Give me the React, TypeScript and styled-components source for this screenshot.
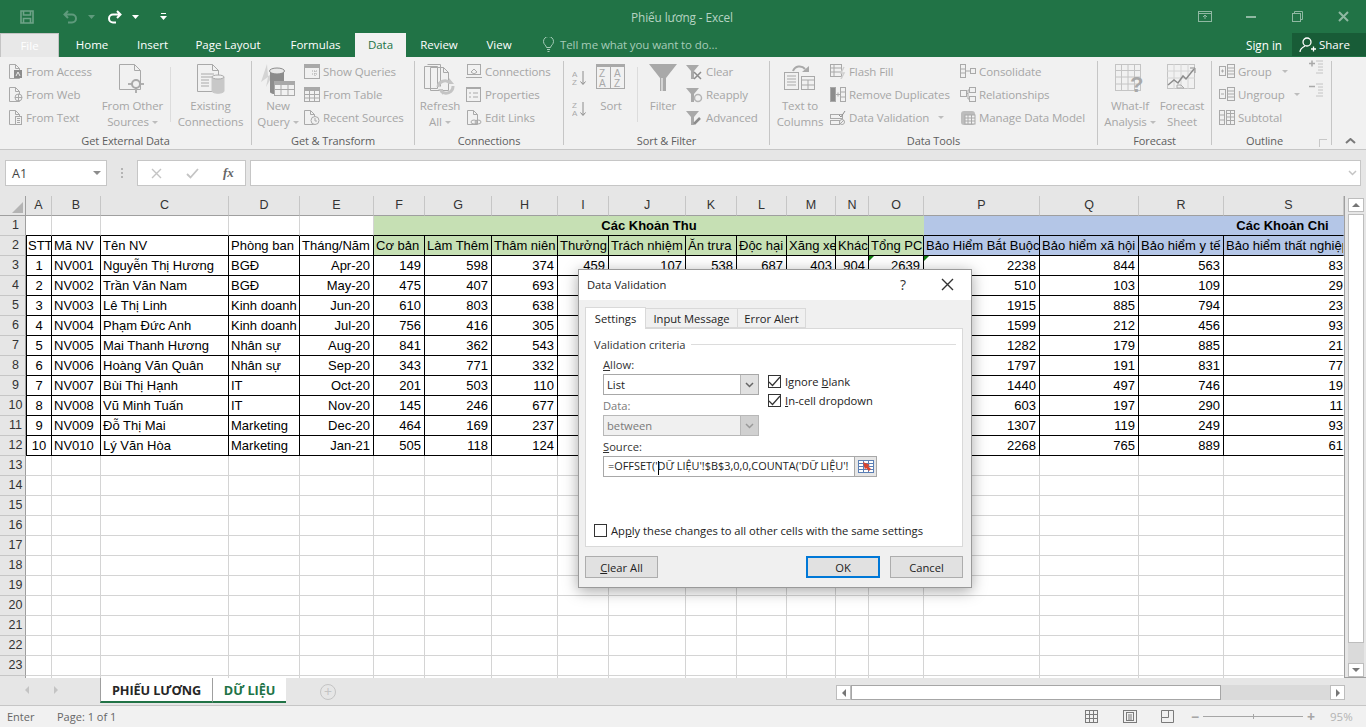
import React from "react";
import styled, { createGlobalStyle } from "styled-components";

const Global = createGlobalStyle`
  html, body { margin: 0; padding: 0; background: #e6e6e6; overflow: hidden; }
  * { box-sizing: border-box; }
`;
const UI = `"Open Sans", "Noto Sans", sans-serif`;
const Page = styled.div`
  width: 1366px; height: 727px; position: relative; overflow: hidden;
  display: flex; flex-direction: column; font-family: ${UI}; font-size: 11.5px; background: #e6e6e6;
`;

/* ---------- title bar ---------- */
const TitleBar = styled.div`
  height: 33px; flex: none; background: #217346; display: grid; grid-template-columns: 1fr auto 1fr; align-items: center;
`;
const Quick = styled.div`display: flex; align-items: center; padding-left: 20px;`;
const QuickSlot = styled.div<{ $w: number }>`width: ${p => p.$w}px; display: flex; align-items: center;`;
const Title = styled.div`color: #b6d3c3; font-size: 11.8px; letter-spacing: -0.1px; padding-right: 2px;`;
const WinButtons = styled.div`display: flex; justify-content: flex-end; align-items: center;`;
const WinSlot = styled.div<{ $w: number }>`width: ${p => p.$w}px; display: flex; justify-content: center;`;

const TabRow = styled.div`height: 24px; flex: none; background: #217346; display: flex; align-items: stretch; line-height: 22px;`;
const FileTab = styled.div`
  width: 59px; background: #e8e8e8; border: 1px solid #c4c4c4; border-bottom: none; color: #fff;
  display: flex; align-items: center; justify-content: center; font-size: 11.5px;
`;
const RibbonTab = styled.div<{ $w: number; $on?: boolean }>`
  width: ${p => p.$w}px; display: flex; align-items: center; justify-content: center; font-size: 11.5px; padding-bottom: 1px;
  background: ${p => (p.$on ? "#f1f1f1" : "transparent")}; color: ${p => (p.$on ? "#217346" : "#fff")};
`;
const TellMe = styled.div`margin-left: 17px; display: flex; align-items: center; gap: 6px; color: #a6ccb8; font-size: 11.5px; letter-spacing: -0.1px; padding-bottom: 1px;`;
const Spacer = styled.div`flex: 1;`;
const SignIn = styled.div`color: #fff; display: flex; align-items: center; padding-right: 10px; font-size: 11.7px; padding-bottom: 1px;`;
const Share = styled.div`
  width: 74px; height: 23px; background: #185c37; color: #fff; display: flex; align-items: center; gap: 3px; padding-left: 7px; font-size: 11.5px;
`;

/* ---------- ribbon ---------- */
const Ribbon = styled.div`
  height: 93px; flex: none; background: #f1f1f1; border-bottom: 1px solid #c6c6c6; padding-top: 4px; display: flex; position: relative;
`;
const Group = styled.div<{ $w: number }>`
  width: ${p => p.$w}px; height: 84px; flex: none; border-right: 1px solid #c6c6c6; position: relative;
`;
const GroupBody = styled.div<{ $pl: number }>`height: 72px; display: flex; padding-left: ${p => p.$pl}px;`;
const GroupLabel = styled.div<{ $pr?: number }>`
  height: 16px; line-height: 16px; text-align: center; color: #5e5e5e; font-size: 11px; letter-spacing: -0.1px; padding-right: ${p => p.$pr ?? 0}px; white-space: nowrap;
`;
const SmallCol = styled.div<{ $w?: number; $ml?: number }>`
  ${p => (p.$w ? `width: ${p.$w}px;` : "")} margin-left: ${p => p.$ml ?? 0}px; margin-top: -1px; display: flex; flex-direction: column; flex: none;
`;
const SmallItem = styled.div`
  height: 23px; display: flex; align-items: center; gap: 3px; color: #a6a6a6; font-size: 11.5px; white-space: nowrap; letter-spacing: -0.1px;
`;
const Large = styled.div<{ $w: number; $ml?: number }>`
  width: ${p => p.$w}px; margin-left: ${p => p.$ml ?? 0}px; flex: none; display: flex; flex-direction: column; align-items: center;
  color: #a6a6a6; font-size: 11.5px; letter-spacing: -0.1px;
`;
const LargeIcon = styled.div`height: 37px; display: flex; align-items: flex-start; padding-top: 3px;`;
const LargeLine = styled.div`height: 16px; line-height: 16px; white-space: nowrap; display: flex; align-items: center;`;
const Caret = styled.span<{ $ml?: number }>`
  display: inline-block; width: 0; height: 0; margin-left: ${p => p.$ml ?? 3}px;
  border-left: 3px solid transparent; border-right: 3px solid transparent; border-top: 3px solid #bdbdbd;
`;
const ThinSep = styled.div<{ $ml: number }>`width: 1px; height: 55px; margin: 6px 0 0 ${p => p.$ml}px; background: #dcdcdc; flex: none;`;
const SortCol = styled.div`width: 16px; flex: none; display: flex; flex-direction: column; gap: 15px; padding-top: 9px;`;
const Launcher = styled.div`position: absolute; right: 4px; bottom: -2px; width: 8px; height: 8px; border: 1px solid #c8c8c8; border-width: 1px 0 0 1px;`;
const Collapse = styled.div`position: absolute; left: 1345px; top: 81px;`;

const Svg = styled.svg`flex: none; display: block; fill: none; stroke: #a9a9a9; stroke-width: 1;`;

/* ---------- formula bar ---------- */
const FormulaRow = styled.div`height: 46px; flex: none; background: #e6e6e6; display: flex; padding: 10px 5px 0; align-items: flex-start;`;
const NameBox = styled.div`
  width: 102px; height: 26px; background: #fff; border: 1px solid #c6c6c6; display: flex; align-items: center; justify-content: space-between;
  padding: 0 5px 0 6px; color: #444; font-size: 12.5px;
`;
const Grip = styled.div`width: 30px; display: flex; flex-direction: column; align-items: center; gap: 2px; justify-content: center; height: 26px;`;
const GripDot = styled.div`width: 2px; height: 2px; background: #b4b4b4;`;
const FxBox = styled.div`
  width: 109px; height: 26px; background: #fff; border: 1px solid #c6c6c6; display: flex; align-items: center; padding-left: 13px; gap: 24px;
`;
const FxText = styled.span`font-family: "Liberation Serif", serif; font-style: italic; font-weight: 700; color: #666; font-size: 13px;`;
const FormulaInput = styled.div`
  flex: 1; margin-left: 4px; height: 26px; background: #fff; border: 1px solid #c6c6c6; display: flex; align-items: center; justify-content: flex-end; padding-right: 3px;
`;

/* ---------- sheet ---------- */
const Workspace = styled.div`height: 482px; flex: none; display: flex; background: #e6e6e6; border-bottom: 1px solid #9f9f9f;`;
const cols = [26, 26, 49, 128, 71, 74, 51, 67, 66, 51, 77, 51, 50, 49, 33, 55, 116, 99, 85, 120];
const Sheet = styled.div`
  width: 1345px; height: 482px; overflow: hidden; display: grid; flex: none; background: #fff; border-right: 1px solid #9f9f9f;
  grid-template-columns: ${cols.map(c => c + "px").join(" ")}; grid-auto-rows: 20px;
  font-family: "Liberation Sans", Arial, sans-serif; font-size: 13px; color: #000;
`;
const Corner = styled.div`
  background: #e6e6e6; border-right: 1px solid #9f9f9f; border-bottom: 1px solid #9f9f9f; position: relative;
  &::after { content: ""; position: absolute; right: 2px; bottom: 2px; border-style: solid; border-width: 0 0 11px 11px; border-color: transparent transparent #b4b4b4 transparent; }
`;
const ColHead = styled.div<{ $shift?: number }>`
  background: #e6e6e6; border-right: 1px solid #c6c6c6; border-bottom: 1px solid #9f9f9f; text-align: center; line-height: 19px;
  font-family: "Liberation Sans", Arial, sans-serif; font-size: 12.5px; color: #333; padding-left: ${p => p.$shift ?? 0}px;
`;
const RowHead = styled.div`
  background: #e6e6e6; border-right: 1px solid #9f9f9f; border-bottom: 1px solid #c6c6c6; text-align: center; line-height: 19px;
  font-size: 12.5px; color: #333; font-family: "Liberation Sans", Arial, sans-serif; padding-left: 6px;
`;
const Cell = styled.div<{ $a?: string; $fill?: string; $line?: boolean; $first?: boolean; $bold?: boolean; $span?: number; $pl?: number; $mark?: boolean; $last?: boolean }>`
  position: relative; overflow: hidden; white-space: nowrap; line-height: 19px; padding: 0 ${p => (p.$last ? 0 : 1)}px 0 ${p => p.$pl ?? 2}px;
  ${p => (p.$span ? `grid-column: span ${p.$span};` : "")}
  text-align: ${p => p.$a ?? "left"};
  font-weight: ${p => (p.$bold ? 700 : 400)};
  background: ${p => p.$fill ?? "#fff"};
  border-right: 1px solid ${p => (p.$last ? "transparent" : p.$line ? "#000" : "#d4d4d4")};
  border-bottom: 1px solid ${p => (p.$line ? "#000" : "#d4d4d4")};
  ${p => (p.$first ? "box-shadow: inset 1px 0 0 #000;" : "")}
  ${p => p.$mark ? `&::before { content: ""; position: absolute; left: 0; top: 0; border-style: solid; border-width: 5px 5px 0 0; border-color: #107c10 transparent transparent transparent; }` : ""}
`;
const CellPad = styled.span<{ $none?: boolean }>`padding-right: ${p => (p.$none ? 0 : 2)}px;`;

const VScroll = styled.div`width: 21px; flex: none; padding: 2px 2px 0 3px; display: flex; flex-direction: column;`;
const ScrollBtn = styled.div`
  width: 16px; height: 14px; flex: none; background: #fff; border: 1px solid #bdbdbd; display: flex; align-items: center; justify-content: center;
`;
const VThumb = styled.div`height: 429px; flex: none; margin-top: 2px; background: #fff; border: 1px solid #bdbdbd; width: 16px;`;
const VTrack = styled.div`flex: 1; background: #dadada;`;
const Tri = styled.span<{ $d: "up" | "down" | "left" | "right"; $c?: string }>`
  width: 0; height: 0; display: inline-block; border: 4px solid transparent;
  ${p => p.$d === "up" ? `border-top: 0; border-bottom-color: ${p.$c ?? "#767676"};` : ""}
  ${p => p.$d === "down" ? `border-bottom: 0; border-top-color: ${p.$c ?? "#767676"};` : ""}
  ${p => p.$d === "left" ? `border-left: 0; border-right-color: ${p.$c ?? "#767676"};` : ""}
  ${p => p.$d === "right" ? `border-right: 0; border-left-color: ${p.$c ?? "#767676"};` : ""}
`;

/* ---------- sheet tabs ---------- */
const SheetBar = styled.div`height: 28px; flex: none; background: #e6e6e6; display: flex; align-items: flex-start; border-bottom: 1px solid #c6c6c6;`;
const NavArrows = styled.div`width: 100px; height: 24px; display: flex; align-items: center; gap: 25px; padding-left: 25px;`;
const SheetTab = styled.div<{ $w: number; $green?: boolean }>`
  width: ${p => p.$w}px; height: 25px; background: #fff; border-left: 1px solid #9f9f9f; border-bottom: 2px solid #217346;
  display: flex; align-items: center; justify-content: center; font-weight: 700; font-size: 12.7px; letter-spacing: -0.1px;
  color: ${p => (p.$green ? "#217346" : "#262626")}; padding-top: 1px;
  &:last-of-type { border-right: 1px solid #9f9f9f; }
`;
const AddSheet = styled.div`
  width: 16px; height: 16px; margin: 6px 0 0 34px; border: 1px solid #c4c4c4; border-radius: 50%; display: flex; align-items: center; justify-content: center; color: #c4c4c4; font-size: 14px; line-height: 1;
`;
const HScroll = styled.div`margin: 7px 21px 0 auto; width: 509px; height: 15px; display: flex;`;
const HBtn = styled.div`width: 15px; height: 15px; flex: none; background: #fff; border: 1px solid #bdbdbd; display: flex; align-items: center; justify-content: center;`;
const HThumb = styled.div`width: 370px; flex: none; background: #fff; border: 1px solid #a6a6a6;`;
const HTrack = styled.div`flex: 1; background: #dadada;`;

/* ---------- status bar ---------- */
const StatusBar = styled.div`flex: 1; background: #f1f1f1; display: flex; align-items: center; color: #666; font-size: 11px; padding-left: 7px;`;
const StatusText = styled.div<{ $w: number }>`width: ${p => p.$w}px;`;
const StatusRight = styled.div`margin-left: auto; display: flex; align-items: center;`;
const ViewBtn = styled.div`width: 38px; display: flex; justify-content: center;`;
const ZoomLine = styled.div`width: 100px; height: 1px; background: #a6a6a6; margin: 0 4px; position: relative;
  &::after { content: ""; position: absolute; left: 50%; top: -2px; width: 1px; height: 5px; background: #a6a6a6; }`;
const ZoomSign = styled.div<{ $ml?: number }>`color: #a6a6a6; font-weight: 700; font-size: 14px; width: 8px; text-align: center; line-height: 1; margin-left: ${p => p.$ml ?? 0}px;`;
const ZoomPct = styled.div`color: #b4b4b4; width: 51px; padding-left: 15px; font-size: 11.5px;`;

/* ---------- dialog ---------- */
const Dialog = styled.div`
  position: absolute; left: 578px; top: 269px; width: 394px; height: 319px; background: #f0f0f0; border: 1px solid #9a9a9a;
  box-shadow: 0 3px 14px rgba(0,0,0,.35); color: #333; font-size: 11.2px; display: flex; flex-direction: column;
`;
const DlgTitle = styled.div`height: 30px; flex: none; background: #fff; display: flex; align-items: center; padding: 0 0 2px 8px; font-size: 11.2px; color: #222;`;
const DlgQ = styled.div`margin-left: auto; width: 56px; text-align: center; font-size: 14px; color: #333;`;
const DlgX = styled.div`width: 40px; display: flex; justify-content: center; padding-right: 8px;`;
const DlgTabs = styled.div`display: flex; padding: 7px 0 0 6px; height: 28px; flex: none; align-items: flex-end; position: relative; z-index: 1;`;
const DlgTab = styled.div<{ $w: number; $on?: boolean }>`
  width: ${p => p.$w}px; height: ${p => (p.$on ? 22 : 20)}px; margin-bottom: ${p => (p.$on ? -1 : 0)}px;
  background: ${p => (p.$on ? "#fff" : "#f0f0f0")}; border: 1px solid #d9d9d9; border-bottom: ${p => (p.$on ? "none" : "1px solid #d9d9d9")};
  ${p => (p.$on ? "" : "border-left: none;")}
  display: flex; align-items: center; justify-content: center; color: #222;
`;
const DlgPanel = styled.div`
  margin: 0 8px 0 6px; height: 219px; flex: none; background: #fff; border: 1px solid #d9d9d9; padding: 8px 6px 0 8px; display: flex; flex-direction: column;
`;
const Fieldset = styled.div`display: flex; align-items: center; gap: 5px; height: 15px; color: #333;`;
const FieldLine = styled.div`flex: 1; height: 1px; background: #dcdcdc;`;
const FormRow = styled.div`display: flex; padding-left: 9px; margin-top: 5px;`;
const FormCol = styled.div`width: 156px; flex: none;`;
const FieldLabel = styled.div<{ $off?: boolean }>`height: 16px; line-height: 16px; color: ${p => (p.$off ? "#7a7a7a" : "#333")};`;
const Select = styled.div<{ $off?: boolean }>`
  height: 21px; margin: 1px 0 3px; border: 1px solid ${p => (p.$off ? "#b8b8b8" : "#a8a8a8")}; display: flex; align-items: center; padding-left: 3px;
  background: ${p => (p.$off ? "#f0f0f0" : "#fff")}; color: ${p => (p.$off ? "#7a7a7a" : "#222")};
`;
const SelectBtn = styled.div<{ $off?: boolean }>`
  margin-left: auto; width: 18px; height: 19px; background: ${p => (p.$off ? "#d0d0d0" : "#e1e1e1")}; border-left: 1px solid #b8b8b8; display: flex; align-items: center; justify-content: center;
`;
const CheckCol = styled.div`margin-left: 9px; padding-top: 18px; display: flex; flex-direction: column; gap: 6px;`;
const CheckRow = styled.div`display: flex; align-items: center; gap: 4px; height: 13px; color: #222; white-space: nowrap;`;
const CheckLabel = styled.span``;
const Box = styled.div`width: 13px; height: 13px; flex: none; border: 1px solid #333; background: #fff; display: flex; align-items: center; justify-content: center;`;
const U = styled.span`text-decoration: underline;`;
const SourceBlock = styled.div`padding-left: 9px;`;
const SourceInput = styled.div`
  width: 274px; height: 21px; margin-top: 1px; border: 1px solid #a8a8a8; background: #fff; display: flex; align-items: center; padding-left: 4px; color: #222; white-space: nowrap; overflow: hidden; position: relative;
`;
const Caretline = styled.span`display: inline-block; width: 1px; height: 14px; background: #000; margin: 0 -1px 0 0; vertical-align: middle;`;
const SourceText = styled.div`flex: 1; overflow: hidden; font-size: 10.9px;`;
const RefBtn = styled.div`width: 22px; height: 19px; flex: none; background: #e6e6e6; border-left: 1px solid #a8a8a8; display: flex; align-items: center; justify-content: center;`;
const ApplyRow = styled.div`display: flex; align-items: center; gap: 4px; margin-top: auto; margin-bottom: 9px; height: 13px; color: #222;`;
const DlgFooter = styled.div`display: flex; padding: 9px 8px 0 6px; justify-content: flex-start;`;
const Btn = styled.div<{ $primary?: boolean; $ml?: number | string }>`
  width: ${p => (p.$primary ? 74 : 73)}px; height: 22px; margin-left: ${p => p.$ml ?? 0};
  background: #e1e1e1; border: ${p => (p.$primary ? "2px solid #0078d7" : "1px solid #adadad")};
  display: flex; align-items: center; justify-content: center; color: #222;
`;

/* ---------- icons ---------- */
const Doc = ({ x = 0.5, y = 0.5, w = 10, h = 14 }: { x?: number; y?: number; w?: number; h?: number }) => (
  <path d={`M${x} ${y}h${w - 4}l4 4v${h - 4}h-${w}z M${x + w - 4} ${y}v4h4`} />
);
const IAccess = () => <Svg width="14" height="15"><Doc /><rect x="5" y="6" width="8" height="8" fill="#8c8c8c" stroke="none" /><path d="M7 12l2-4 2 4" stroke="#eee" /></Svg>;
const IWeb = () => <Svg width="14" height="15"><Doc /><circle cx="9.5" cy="10.5" r="3.5" fill="#f1f1f1" /><path d="M6 10.5h7M9.5 7v7" /></Svg>;
const IText = () => <Svg width="14" height="15"><Doc /><rect x="6.5" y="6.5" width="6" height="8" fill="#f1f1f1" /><path d="M8 8.5h3M8 10.5h3M8 12.5h3" /></Svg>;
const IOther = () => <Svg width="28" height="30"><path d="M.5.5h15l6 6v19H.5z M15.5.5v6h6" /><rect x="8" y="15" width="16" height="2" fill="#b0b0b0" stroke="none" transform="translate(1 4)" /><rect x="16" y="15" width="2" height="14" fill="#b0b0b0" stroke="none" /><circle cx="17" cy="20" r="4" fill="#f1f1f1" strokeWidth="2" /></Svg>;
const IExisting = () => <Svg width="28" height="30"><path d="M.5.5h15l6 6v21H.5z M15.5.5v6h6" /><path d="M4 10h13M4 13h13M4 16h8M4 19h8M4 22h8" /><path d="M15 13v14c0 3 12 3 12 0V13" fill="#c8c8c8" stroke="#c8c8c8" /><ellipse cx="21" cy="13" rx="6" ry="2" fill="#f1f1f1" /></Svg>;
const INewQuery = () => <Svg width="34" height="33"><path d="M6 0L0 18l7-5-2 10 8-14-6 3z" fill="#d4d4d4" stroke="none" /><path d="M9 8v20c0 3 14 3 14 0V8" fill="#8c8c8c" stroke="none" /><ellipse cx="16" cy="7" rx="7.5" ry="3" fill="#e8e8e8" stroke="#8c8c8c" /><rect x="13.5" y="17.5" width="20" height="14" fill="#f1f1f1" /><rect x="13.5" y="17.5" width="20" height="3" fill="#a9a9a9" /><path d="M20 20v11M27 20v11M14 25.5h19" /></Svg>;
const IShowQ = () => <Svg width="16" height="15"><rect x=".5" y=".5" width="15" height="14" /><rect x=".5" y=".5" width="15" height="3" fill="#a9a9a9" /><path d="M8 7h5M8 10h5M11 7v5" strokeDasharray="1 1" /></Svg>;
const ITable = () => <Svg width="16" height="15"><rect x=".5" y=".5" width="15" height="14" /><rect x=".5" y=".5" width="15" height="3" fill="#a9a9a9" /><path d="M5.5 3v12M10.5 3v12M0 7.5h16M0 11h16" /></Svg>;
const IRecent = () => <Svg width="16" height="15"><Doc /><circle cx="11" cy="10.5" r="4" fill="#f1f1f1" /><path d="M11 8v3h2" /></Svg>;
const IRefresh = () => <Svg width="32" height="32"><path d="M.5 2.5h13v22H.5z M3.5.5h13v22M6.5 3.5h13l5 5v18h-18z" fill="#f1f1f1" /><path d="M19.5 3.5v5h5" /><path d="M14 23a7 7 0 0 1 12-4M29 22a7 7 0 0 1-12 5" stroke="#c4c4c4" strokeWidth="3" /><path d="M25 14v6h5zM19 31v-6h-5z" fill="#c4c4c4" stroke="none" /></Svg>;
const IConn = () => <Svg width="16" height="15"><rect x="1.5" y=".5" width="13" height="10" /><path d="M0 13.5h16M5 8l3-3 3 3-3 2z" /></Svg>;
const IProps = () => <Svg width="16" height="15"><rect x=".5" y=".5" width="14" height="14" /><path d="M0 .5h15" strokeWidth="3" /><path d="M3 6h2M3 10h2M7 6h5M7 10h5" /></Svg>;
const ILinks = () => <Svg width="16" height="15"><Doc x={1.5} /><ellipse cx="8" cy="12" rx="3" ry="2" fill="#f1f1f1" /><ellipse cx="12" cy="12" rx="3" ry="2" /></Svg>;
const ISortAZ = ({ flip }: { flip?: boolean }) => (
  <Svg width="15" height="16">
    <text x="0" y="7" fontSize="8" fontFamily="Liberation Sans" stroke="none" fill="#a9a9a9">{flip ? "Z" : "A"}</text>
    <text x="0" y="15" fontSize="8" fontFamily="Liberation Sans" stroke="none" fill="#a9a9a9">{flip ? "A" : "Z"}</text>
    <path d="M11 1v13M8.5 11.5l2.5 3 2.5-3" stroke="#8c8c8c" />
  </Svg>
);
const ISort = () => (
  <Svg width="30" height="26">
    <rect x=".5" y=".5" width="28" height="24" />
    <rect x="0" y="0" width="29" height="3" fill="#a9a9a9" stroke="none" />
    <path d="M14.5 3v22" />
    <text x="3" y="13" fontSize="10" fontFamily="Liberation Sans" stroke="none" fill="#a9a9a9">Z</text>
    <text x="3" y="23" fontSize="10" fontFamily="Liberation Sans" stroke="none" fill="#a9a9a9">A</text>
    <text x="18" y="13" fontSize="10" fontFamily="Liberation Sans" stroke="none" fill="#a9a9a9">A</text>
    <text x="18" y="23" fontSize="10" fontFamily="Liberation Sans" stroke="none" fill="#a9a9a9">Z</text>
  </Svg>
);
const IFilter = () => <Svg width="28" height="28"><path d="M0 0h28L17 14v13h-6V14z" fill="#a9a9a9" stroke="none" /><path d="M13 14v13" stroke="#d4d4d4" strokeWidth="2" /></Svg>;
const SmallFunnel = () => <path d="M0 1h13L8 7v8H5V7z" fill="#a9a9a9" stroke="none" />;
const IClear = () => <Svg width="17" height="16"><SmallFunnel /><path d="M8 8l7 7M15 8l-7 7" stroke="#8c8c8c" strokeWidth="1.5" /></Svg>;
const IReapply = () => <Svg width="17" height="16"><SmallFunnel /><circle cx="12" cy="11" r="3.5" fill="#f1f1f1" stroke="#b4b4b4" strokeWidth="1.5" /></Svg>;
const IAdv = () => <Svg width="17" height="16"><SmallFunnel /><path d="M8 14l6-6" stroke="#8c8c8c" strokeWidth="2.5" /></Svg>;
const ITextCols = () => (
  <Svg width="32" height="26">
    <rect x=".5" y="8.5" width="14" height="17" /><path d="M3 12h9M3 15h9M3 18h9M3 21h9" />
    <rect x="17.5" y="12.5" width="13" height="13" /><path d="M17 16h14M24 16v10M17 21h14" />
    <path d="M9 7a7 7 0 0 1 12-2" strokeWidth="2" /><path d="M18 8h7V2z" fill="#a9a9a9" stroke="none" />
  </Svg>
);
const IFlash = () => <Svg width="16" height="15"><rect x=".5" y=".5" width="11" height="12" /><path d="M0 4h12M0 8h12M4 0v12" /><path d="M14 3l-3 6h3l-3 6" stroke="#d0d0d0" strokeWidth="1.5" /></Svg>;
const IRemDup = () => <Svg width="16" height="15"><rect x=".5" y=".5" width="5" height="14" fill="#8c8c8c" /><rect x="10.5" y=".5" width="5" height="14" /><path d="M10 5h6M10 10h6M6 7.5h4M8 5.5v4" /></Svg>;
const IValid = () => <Svg width="16" height="15"><rect x=".5" y="4.5" width="12" height="4" /><rect x=".5" y="10.5" width="9" height="4" /><path d="M9 5l2 2 4-6" stroke="#8c8c8c" /><circle cx="12" cy="12" r="2.5" /><path d="M10 14l4-4" /></Svg>;
const IConsol = () => <Svg width="16" height="15"><rect x=".5" y=".5" width="5" height="13" /><path d="M0 5h6M0 9h6" /><rect x="10.5" y="4.5" width="5" height="5" /><path d="M6 7h4" /></Svg>;
const IRel = () => <Svg width="16" height="15"><rect x=".5" y="3.5" width="6" height="6" /><rect x="9.5" y=".5" width="6" height="5" /><rect x="9.5" y="9.5" width="6" height="5" /><path d="M6 6.5h2V3h2M8 6.5V12h2" /></Svg>;
const IModel = () => <Svg width="16" height="15"><rect x="1" y="1" width="14" height="14" rx="3" fill="#bdbdbd" stroke="none" /><rect x="5" y="5" width="10" height="9" fill="#f1f1f1" /><path d="M8 5v9M11.5 5v9M5 8h10M5 11h10" /></Svg>;
const IWhatIf = () => (
  <Svg width="30" height="34">
    <rect x=".5" y=".5" width="25" height="26" stroke="#c4c4c4" />
    <path d="M6.5 0v27M13 0v27M19.5 0v27M0 6.5h26M0 13h26M0 20h26" stroke="#c4c4c4" />
    <text x="15" y="28" fontSize="22" fontWeight="700" fontFamily="Liberation Sans" stroke="none" fill="#a9a9a9">?</text>
  </Svg>
);
const IForecast = () => (
  <Svg width="30" height="26">
    <rect x=".5" y=".5" width="27" height="24" stroke="#c4c4c4" />
    <path d="M7 0v25M14 0v25M21 0v25M0 7h28M0 14h28" stroke="#d4d4d4" />
    <path d="M1 21l6-5 4 3 5-7 3 3 8-10" stroke="#8c8c8c" strokeWidth="1.5" />
    <path d="M10 21h4l3 3h-7z" /><path d="M23 4h5v5" stroke="#8c8c8c" />
  </Svg>
);
const IGroup = ({ u }: { u?: boolean }) => <Svg width="16" height="15"><rect x=".5" y="2.5" width="6" height="9" /><path d={u ? "M2 7h3" : "M2 7h3M3.5 5.5v3"} /><rect x="8.5" y=".5" width="7" height="13" /><path d="M8 4h8M8 7h8M8 10h8" /></Svg>;
const ISubtotal = () => <Svg width="16" height="15"><rect x=".5" y=".5" width="5" height="14" /><rect x="7.5" y=".5" width="8" height="14" /><path d="M0 5h6M0 10h6M8 3.5h8M8 7h8M8 10.5h8M11.5 0v15" /></Svg>;
const IDetail = ({ minus }: { minus?: boolean }) => <Svg width="15" height="14" style={{ margin: "0 0 9px" }}><path d={minus ? "M0 3.5h6" : "M0 3.5h6M3 .5v6"} stroke="#a9a9a9" strokeWidth="1.5" /><path d="M7 1h7M9 4h5M9 7h5M9 10h5M7 13h7" stroke="#c4c4c4" /></Svg>;

const dim = "#8fb8a2";
const ISave = () => <Svg width="14" height="14" style={{ stroke: "#6ea388", strokeWidth: 1.6 }}><path d="M1 1h12v12H1z M3.5 1v4h7V1 M3.5 13V8.5h7V13" /></Svg>;
const IUndo = ({ c }: { c: string }) => <Svg width="15" height="14" style={{ stroke: c, strokeWidth: 2 }}><path d="M5 1L1.5 4.5 5 8M2 4.5h7a3.5 3.5 0 0 1 0 8H5" /></Svg>;
const IRedo = () => <Svg width="15" height="14" style={{ stroke: "#fff", strokeWidth: 2 }}><path d="M10 1l3.5 3.5L10 8M13 4.5H6a3.5 3.5 0 0 0 0 8h3" /></Svg>;
const SmallDown = ({ c }: { c: string }) => <Svg width="7" height="4"><path d="M0 0h7L3.5 4z" fill={c} stroke="none" /></Svg>;
const ICustom = () => <Svg width="7" height="7"><path d="M1 .5h5" stroke="#fff" /><path d="M0 3h7L3.5 7z" fill="#fff" stroke="none" /></Svg>;
const IDisplay = () => <Svg width="14" height="11" style={{ stroke: dim }}><rect x=".5" y=".5" width="13" height="10" /><path d="M0 2.5h14M7 8V4M5 6l2-2 2 2" /></Svg>;
const IMin = () => <Svg width="10" height="2" style={{ stroke: dim }}><path d="M0 1h10" strokeWidth="2" /></Svg>;
const IRestore = () => <Svg width="11" height="11" style={{ stroke: dim }}><rect x=".5" y="2.5" width="8" height="8" /><path d="M2.5 2.5v-2h8v8h-2" /></Svg>;
const IClose = () => <Svg width="11" height="11" style={{ stroke: dim, strokeWidth: 2 }}><path d="M1 1l9 9M10 1l-9 9" /></Svg>;
const IBulb = () => <Svg width="11" height="15" style={{ stroke: "#a6ccb8" }}><path d="M3.5 10.5C3 8 .5 7.5.5 4.5a5 5 0 0 1 10 0c0 3-2.500 3.500-3 6zM4 12.500h3M4.500 14.500h2" /></Svg>;
const IShare = () => <Svg width="17" height="16" style={{ stroke: "#fff", strokeWidth: 1.3 }}><circle cx="8" cy="5" r="4" /><path d="M1 15c0-3 3-5 5-6M12 12h5M14.500 9.500v5" /></Svg>;
const ICaretChev = ({ c = "#a9a9a9" }: { c?: string }) => <Svg width="9" height="6" style={{ stroke: c, strokeWidth: 1.5 }}><path d="M1 1l3.500 3.500L8 1" /></Svg>;
const IX = ({ c, s = 11 }: { c: string; s?: number }) => <Svg width={s} height={s} style={{ stroke: c, strokeWidth: 1.4 }}><path d={`M1 1l${s - 2} ${s - 2}M${s - 1} 1l-${s - 2} ${s - 2}`} /></Svg>;
const ICheck = ({ c = "#c4c4c4", s = 1.8 }: { c?: string; s?: number }) => <Svg width="13" height="11" style={{ stroke: c, strokeWidth: s }}><path d="M1 6l3.500 3.500L12 1" /></Svg>;
const IRef = () => (
  <Svg width="16" height="13" style={{ stroke: "#5b7fb5" }}>
    <rect x=".5" y=".5" width="15" height="12" fill="#fff" /><path d="M0 3.500h16M0 6.500h16M0 9.500h16M5.500 0v13M10.500 0v13" />
    <path d="M5 2l7 3-2 1 3 3-2 2-3-3-1 2z" fill="#d8442f" stroke="none" />
  </Svg>
);
const IViewNormal = () => <Svg width="14" height="14" style={{ stroke: "#7a7a7a" }}><rect x=".5" y=".5" width="12" height="12" /><path d="M4.500 0v13M8.500 0v13M0 4.500h13M0 8.500h13" /></Svg>;
const IViewLayout = () => <Svg width="14" height="14" style={{ stroke: "#7a7a7a" }}><rect x=".5" y=".5" width="13" height="12" /><rect x="3.500" y="2.500" width="7" height="8" /><path d="M5 5h4M5 7h4M5 9h4" /></Svg>;
const IViewBreak = () => <Svg width="14" height="14" style={{ stroke: "#7a7a7a" }}><path d="M.5 7.500v5h12v-12h-12v7h7v-7M.5 7.500" /></Svg>;

/* ---------- data ---------- */
const letters = "ABCDEFGHIJKLMNOPQRS".split("");
const people: [string, string, string][] = [
  ["Nguyễn Thị Hương", "BGĐ", "Apr-20"], ["Trần Văn Nam", "BGĐ", "May-20"], ["Lê Thị Linh", "Kinh doanh", "Jun-20"],
  ["Phạm Đức Anh", "Kinh doanh", "Jul-20"], ["Mai Thanh Hương", "Nhân sự", "Aug-20"], ["Hoàng Văn Quân", "Nhân sự", "Sep-20"],
  ["Bùi Thị Hạnh", "IT", "Oct-20"], ["Vũ Minh Tuấn", "IT", "Nov-20"], ["Đỗ Thị Mai", "Marketing", "Dec-20"], ["Lý Văn Hòa", "Marketing", "Jan-21"],
];
const f = [149, 475, 610, 756, 841, 343, 201, 145, 464, 505];
const g = [598, 407, 803, 416, 362, 771, 503, 246, 169, 118];
const h = [374, 693, 638, 305, 543, 332, 110, 677, 237, 124];
const p = [2238, 510, 1915, 1599, 1282, 1797, 1440, 603, 1307, 2268];
const q = [844, 103, 885, 212, 179, 191, 497, 197, 119, 765];
const r = [563, 109, 794, 456, 885, 831, 746, 290, 249, 889];
const s = [83, 29, 23, 93, 21, 77, 19, 11, 93, 61];
const firstRow = [459, 107, 538, 687, 403, 904, 2639];
const green = "#c6e0b4";
const blue = "#b4c6e7";
const heads: [string, string?][] = [
  ["STT"], ["Mã NV"], ["Tên NV"], ["Phòng ban"], ["Tháng/Năm"], ["Cơ bản", green], ["Làm Thêm", green], ["Thâm niên", green], ["Thưởng", green],
  ["Trách nhiệm", green], ["Ăn trưa", green], ["Độc hại", green], ["Xăng xe", green], ["Khác", green], ["Tổng PC", green],
  ["Bảo Hiểm Bắt Buộc", blue], ["Bảo hiểm xã hội", blue], ["Bảo hiểm y tế", blue], ["Bảo hiểm thất nghiệp", blue],
];

const Small = ({ icon, label, caretMl }: { icon: React.ReactNode; label: string; caretMl?: number }) => (
  <SmallItem>{icon}{label}{caretMl !== undefined && <Caret $ml={caretMl} />}</SmallItem>
);

export default function App() {
  return (
    <Page>
      <Global />
      <TitleBar>
        <Quick>
          <QuickSlot $w={43}><ISave /></QuickSlot>
          <QuickSlot $w={25}><IUndo c="#5f9a7c" /></QuickSlot>
          <QuickSlot $w={19}><SmallDown c="#5f9a7c" /></QuickSlot>
          <QuickSlot $w={25}><IRedo /></QuickSlot>
          <QuickSlot $w={28}><SmallDown c="#fff" /></QuickSlot>
          <QuickSlot $w={10}><ICustom /></QuickSlot>
        </Quick>
        <Title>Phiếu lương - Excel</Title>
        <WinButtons>
          <WinSlot $w={46}><IDisplay /></WinSlot>
          <WinSlot $w={46}><IMin /></WinSlot>
          <WinSlot $w={46}><IRestore /></WinSlot>
          <WinSlot $w={46}><IClose /></WinSlot>
        </WinButtons>
      </TitleBar>
      <TabRow>
        <FileTab>File</FileTab>
        <RibbonTab $w={66}>Home</RibbonTab>
        <RibbonTab $w={55}>Insert</RibbonTab>
        <RibbonTab $w={96}>Page Layout</RibbonTab>
        <RibbonTab $w={79}>Formulas</RibbonTab>
        <RibbonTab $w={51} $on>Data</RibbonTab>
        <RibbonTab $w={66}>Review</RibbonTab>
        <RibbonTab $w={54}>View</RibbonTab>
        <TellMe><IBulb />Tell me what you want to do...</TellMe>
        <Spacer />
        <SignIn>Sign in</SignIn>
        <Share><IShare />Share</Share>
      </TabRow>

      <Ribbon>
        <Group $w={252}>
          <GroupBody $pl={9}>
            <SmallCol $w={93}>
              <Small icon={<IAccess />} label="From Access" />
              <Small icon={<IWeb />} label="From Web" />
              <Small icon={<IText />} label="From Text" />
            </SmallCol>
            <Large $w={61}>
              <LargeIcon><IOther /></LargeIcon>
              <LargeLine>From Other</LargeLine>
              <LargeLine>Sources<Caret /></LargeLine>
            </Large>
            <ThinSep $ml={7} />
            <Large $w={67} $ml={6}>
              <LargeIcon><IExisting /></LargeIcon>
              <LargeLine>Existing</LargeLine>
              <LargeLine>Connections</LargeLine>
            </Large>
          </GroupBody>
          <GroupLabel>Get External Data</GroupLabel>
        </Group>
        <Group $w={163}>
          <GroupBody $pl={8}>
            <Large $w={36}>
              <LargeIcon><INewQuery /></LargeIcon>
              <LargeLine>New</LargeLine>
              <LargeLine>Query<Caret /></LargeLine>
            </Large>
            <SmallCol $ml={8}>
              <Small icon={<IShowQ />} label="Show Queries" />
              <Small icon={<ITable />} label="From Table" />
              <Small icon={<IRecent />} label="Recent Sources" />
            </SmallCol>
          </GroupBody>
          <GroupLabel>Get &amp; Transform</GroupLabel>
        </Group>
        <Group $w={149}>
          <GroupBody $pl={7}>
            <Large $w={36}>
              <LargeIcon><IRefresh /></LargeIcon>
              <LargeLine>Refresh</LargeLine>
              <LargeLine>All<Caret /></LargeLine>
            </Large>
            <SmallCol $ml={8}>
              <Small icon={<IConn />} label="Connections" />
              <Small icon={<IProps />} label="Properties" />
              <Small icon={<ILinks />} label="Edit Links" />
            </SmallCol>
          </GroupBody>
          <GroupLabel>Connections</GroupLabel>
        </Group>
        <Group $w={206}>
          <GroupBody $pl={8}>
            <SortCol><ISortAZ /><ISortAZ flip /></SortCol>
            <Large $w={30} $ml={8}>
              <LargeIcon><ISort /></LargeIcon>
              <LargeLine>Sort</LargeLine>
            </Large>
            <ThinSep $ml={11} />
            <Large $w={36} $ml={7}>
              <LargeIcon><IFilter /></LargeIcon>
              <LargeLine>Filter</LargeLine>
            </Large>
            <SmallCol $ml={5}>
              <Small icon={<IClear />} label="Clear" />
              <Small icon={<IReapply />} label="Reapply" />
              <Small icon={<IAdv />} label="Advanced" />
            </SmallCol>
          </GroupBody>
          <GroupLabel>Sort &amp; Filter</GroupLabel>
        </Group>
        <Group $w={328}>
          <GroupBody $pl={6}>
            <Large $w={48}>
              <LargeIcon><ITextCols /></LargeIcon>
              <LargeLine>Text to</LargeLine>
              <LargeLine>Columns</LargeLine>
            </Large>
            <SmallCol $w={130} $ml={6}>
              <Small icon={<IFlash />} label="Flash Fill" />
              <Small icon={<IRemDup />} label="Remove Duplicates" />
              <Small icon={<IValid />} label="Data Validation" caretMl={6} />
            </SmallCol>
            <SmallCol>
              <Small icon={<IConsol />} label="Consolidate" />
              <Small icon={<IRel />} label="Relationships" />
              <Small icon={<IModel />} label="Manage Data Model" />
            </SmallCol>
          </GroupBody>
          <GroupLabel>Data Tools</GroupLabel>
        </Group>
        <Group $w={114}>
          <GroupBody $pl={8}>
            <Large $w={48}>
              <LargeIcon><IWhatIf /></LargeIcon>
              <LargeLine>What-If</LargeLine>
              <LargeLine>Analysis<Caret /></LargeLine>
            </Large>
            <Large $w={44} $ml={6}>
              <LargeIcon><IForecast /></LargeIcon>
              <LargeLine>Forecast</LargeLine>
              <LargeLine>Sheet</LargeLine>
            </Large>
          </GroupBody>
          <GroupLabel>Forecast</GroupLabel>
        </Group>
        <Group $w={120}>
          <GroupBody $pl={7}>
            <SmallCol $w={90}>
              <Small icon={<IGroup />} label="Group" caretMl={7} />
              <Small icon={<IGroup u />} label="Ungroup" caretMl={6} />
              <Small icon={<ISubtotal />} label="Subtotal" />
            </SmallCol>
            <SmallCol>
              <SmallItem><IDetail /></SmallItem>
              <SmallItem><IDetail minus /></SmallItem>
            </SmallCol>
          </GroupBody>
          <GroupLabel $pr={14}>Outline</GroupLabel>
          <Launcher />
        </Group>
        <Collapse>
          <Svg width="11" height="6" style={{ stroke: "#7a7a7a", strokeWidth: 2 }}><path d="M1 5l4.500-4 4.500 4" /></Svg>
        </Collapse>
      </Ribbon>

      <FormulaRow>
        <NameBox>A1<Tri $d="down" $c="#8c8c8c" /></NameBox>
        <Grip><GripDot /><GripDot /><GripDot /></Grip>
        <FxBox><IX c="#c4c4c4" s={11} /><ICheck /><FxText>fx</FxText></FxBox>
        <FormulaInput><ICaretChev c="#c4c4c4" /></FormulaInput>
      </FormulaRow>

      <Workspace>
        <Sheet>
          <Corner />
          {letters.map(l => <ColHead key={l} $shift={l === "S" ? 10 : 0}>{l}</ColHead>)}

          <RowHead>1</RowHead>
          {letters.slice(0, 5).map(l => <Cell key={l} style={{ borderBottomColor: "#000" }} />)}
          <Cell $span={10} $a="center" $fill={green} $bold $line style={{ borderRightColor: green }}>Các Khoản Thu</Cell>
          <Cell $span={4} $a="center" $fill={blue} $bold $line $pl={298} $last>Các Khoản Chi</Cell>

          <RowHead>2</RowHead>
          {heads.map(([t, c], i) => <Cell key={t} $line $fill={c} $first={i === 0} $last={i === heads.length - 1}>{t}</Cell>)}

          {people.map((row, i) => (
            <React.Fragment key={row[0]}>
              <RowHead>{i + 3}</RowHead>
              <Cell $line $first $a="center">{i + 1}</Cell>
              <Cell $line>NV{String(i + 1).padStart(3, "0")}</Cell>
              <Cell $line>{row[0]}</Cell>
              <Cell $line>{row[1]}</Cell>
              <Cell $line $a="right"><CellPad>{row[2]}</CellPad></Cell>
              <Cell $line $a="right"><CellPad>{f[i]}</CellPad></Cell>
              <Cell $line $a="right"><CellPad>{g[i]}</CellPad></Cell>
              <Cell $line $a="right"><CellPad>{h[i]}</CellPad></Cell>
              {[0, 1, 2, 3, 4, 5, 6].map(k => (
                <Cell key={k} $line $a="right" $mark={i === 0 && k === 6}><CellPad>{i === 0 ? firstRow[k] : ""}</CellPad></Cell>
              ))}
              <Cell $line $a="right" $mark={i === 0}><CellPad>{p[i]}</CellPad></Cell>
              <Cell $line $a="right"><CellPad>{q[i]}</CellPad></Cell>
              <Cell $line $a="right"><CellPad>{r[i]}</CellPad></Cell>
              <Cell $line $a="right" $last><CellPad $none>{s[i]}</CellPad></Cell>
            </React.Fragment>
          ))}

          {Array.from({ length: 12 }, (_, i) => i + 13).map(n => (
            <React.Fragment key={n}>
              <RowHead>{n < 24 ? n : ""}</RowHead>
              {letters.map(l => <Cell key={l} $last={l === "S"} />)}
            </React.Fragment>
          ))}
        </Sheet>
        <VScroll>
          <ScrollBtn><Tri $d="up" /></ScrollBtn>
          <VThumb />
          <VTrack />
          <ScrollBtn><Tri $d="down" /></ScrollBtn>
        </VScroll>
      </Workspace>

      <SheetBar>
        <NavArrows><Tri $d="left" $c="#c4c4c4" /><Tri $d="right" $c="#c4c4c4" /></NavArrows>
        <SheetTab $w={112}>PHIẾU LƯƠNG</SheetTab>
        <SheetTab $w={74} $green>DỮ LIỆU</SheetTab>
        <AddSheet>+</AddSheet>
        <HScroll>
          <HBtn><Tri $d="left" /></HBtn>
          <HThumb />
          <HTrack />
          <HBtn><Tri $d="right" /></HBtn>
        </HScroll>
      </SheetBar>

      <StatusBar>
        <StatusText $w={50}>Enter</StatusText>
        <StatusText $w={80}>Page: 1 of 1</StatusText>
        <StatusRight>
          <ViewBtn><IViewNormal /></ViewBtn>
          <ViewBtn><IViewLayout /></ViewBtn>
          <ViewBtn><IViewBreak /></ViewBtn>
          <ZoomSign $ml={4}>−</ZoomSign>
          <ZoomLine />
          <ZoomSign>+</ZoomSign>
          <ZoomPct>95%</ZoomPct>
        </StatusRight>
      </StatusBar>

      <Dialog>
        <DlgTitle>Data Validation<DlgQ>?</DlgQ><DlgX><IX c="#333" s={13} /></DlgX></DlgTitle>
        <DlgTabs>
          <DlgTab $w={61} $on>Settings</DlgTab>
          <DlgTab $w={92}>Input Message</DlgTab>
          <DlgTab $w={68}>Error Alert</DlgTab>
        </DlgTabs>
        <DlgPanel>
          <Fieldset>Validation criteria<FieldLine /></Fieldset>
          <FormRow>
            <FormCol>
              <FieldLabel><U>A</U>llow:</FieldLabel>
              <Select>List<SelectBtn><ICaretChev c="#666" /></SelectBtn></Select>
              <FieldLabel $off>Data:</FieldLabel>
              <Select $off>between<SelectBtn $off><ICaretChev c="#999" /></SelectBtn></Select>
            </FormCol>
            <CheckCol>
              <CheckRow><Box><ICheck c="#333" s={1.2} /></Box><CheckLabel>Ignore <U>b</U>lank</CheckLabel></CheckRow>
              <CheckRow><Box><ICheck c="#333" s={1.2} /></Box><CheckLabel><U>I</U>n-cell dropdown</CheckLabel></CheckRow>
            </CheckCol>
          </FormRow>
          <SourceBlock>
            <FieldLabel><U>S</U>ource:</FieldLabel>
            <SourceInput>
              <SourceText>=OFFSET('<Caretline />DỮ LIỆU'!$B$3,0,0,COUNTA('DỮ LIỆU'!</SourceText>
              <RefBtn><IRef /></RefBtn>
            </SourceInput>
          </SourceBlock>
          <ApplyRow><Box /><CheckLabel>Ap<U>p</U>ly these changes to all other cells with the same settings</CheckLabel></ApplyRow>
        </DlgPanel>
        <DlgFooter>
          <Btn><U>C</U>lear All</Btn>
          <Btn $primary $ml="148px">OK</Btn>
          <Btn $ml="10px">Cancel</Btn>
        </DlgFooter>
      </Dialog>
    </Page>
  );
}
